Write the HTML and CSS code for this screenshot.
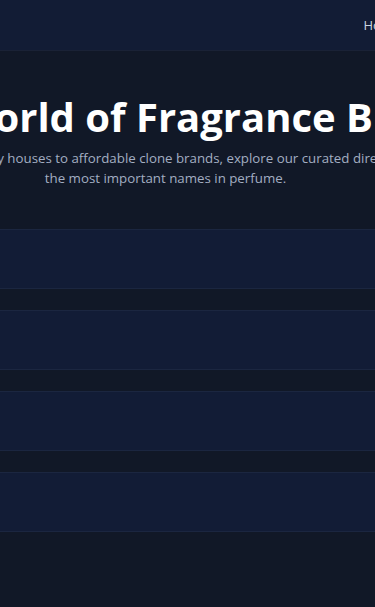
FILE: index.html
```html
<!DOCTYPE html>
<html lang="en">
<head>
    <meta charset="UTF-8">
    <meta name="viewport" content="width=device-width, initial-scale=1.0">
    <title>Fragrance Brands Directory</title>
    <link rel="stylesheet" href="styles.css">
</head>
<body>
    <div class="header">
        <div class="header-inner">
            <a class="logo" href="#">ScentAtlas</a>
            <nav class="nav">
                <a href="#">Home</a>
                <a href="#">Brands</a>
                <a href="#">Clones</a>
                <a href="#">About</a>
            </nav>
        </div>
    </div>

    <div class="hero">
        <div class="hero-inner">
            <h1>The World of Fragrance Brands</h1>
            <p>From legendary houses to affordable clone brands, explore our curated directory of<br>the most important names in perfume.</p>
        </div>
    </div>

    <div class="brand-list">
        <div class="brand-card"></div>
        <div class="brand-card"></div>
        <div class="brand-card"></div>
        <div class="brand-card"></div>
    </div>
</body>
</html>
```
FILE: styles.css
```css
html, body {
    overflow-x: hidden;
}
body {
    font-family: "Open Sans", "Noto Sans", Arial, sans-serif;
    margin: 0;
    padding: 0;
    background-color: #111827;
    color: #f8fafc;
}
.header {
    background-color: #121c35;
    border-bottom: 1px solid #1a2236;
    height: 50px;
    display: flex;
    justify-content: center;
}
.header-inner {
    flex: 0 0 1000px;
    display: flex;
    justify-content: space-between;
    align-items: center;
    padding: 0 24px;
    box-sizing: border-box;
}
.logo {
    color: #ffffff;
    font-weight: 700;
    font-size: 18px;
    text-decoration: none;
}
.nav {
    display: flex;
    gap: 22px;
    width: 300px;
}
.nav a {
    color: #cbd5e1;
    font-size: 13px;
    text-decoration: none;
}
.hero {
    display: flex;
    justify-content: center;
    padding: 38px 0 41px;
}
.hero-inner {
    flex: 0 0 1000px;
    display: flex;
    flex-direction: column;
    align-items: center;
    text-align: center;
}
.hero h1 {
    margin: 0 16px 0 0;
    font-size: 40px;
    line-height: 56px;
    font-weight: 700;
    color: #ffffff;
    white-space: nowrap;
}
.hero p {
    margin: 3px 44px 0 0;
    font-size: 13.3px;
    line-height: 20px;
    color: #a3aec2;
    white-space: nowrap;
}
.brand-list {
    display: flex;
    flex-direction: column;
    gap: 21px;
}
.brand-card {
    height: 58px;
    background-color: #121c36;
    border-top: 1px solid #1b2640;
    border-bottom: 1px solid #1b2640;
}
```
